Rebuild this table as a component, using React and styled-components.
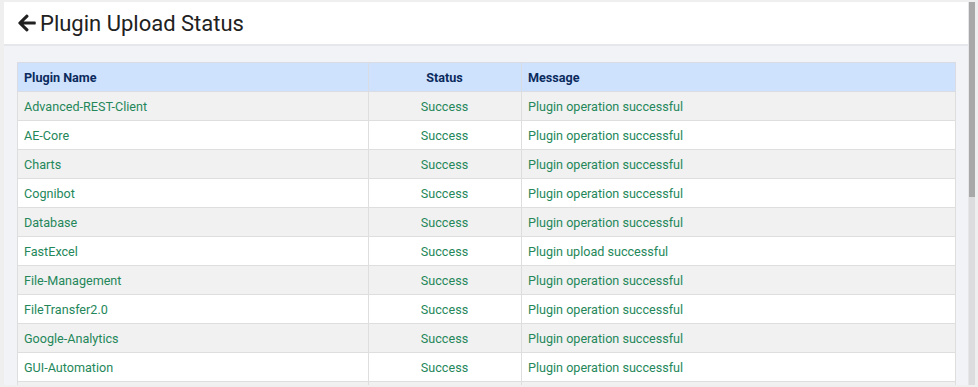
import React from "react";
import styled, { createGlobalStyle } from "styled-components";
import { FaArrowLeft } from "react-icons/fa";

const Global = createGlobalStyle`
  html, body { margin: 0; padding: 0; background: #efefef; overflow: hidden; }
  body { font-family: Roboto, "Noto Sans", Arial, sans-serif; }
`;

const Frame = styled.div`
  display: flex;
  padding: 2px 3px 2px 4px;
  height: 387px;
  box-sizing: border-box;
`;

const Content = styled.div`
  flex: 1;
  min-width: 0;
  overflow: hidden;
  background: #f2f3f7;
`;

const ScrollTrack = styled.div`
  width: 6px;
  flex: none;
  display: flex;
  flex-direction: column;
  background: #dcdcde;
  border-left: 1px solid #e6e6e8;
`;

const ScrollThumb = styled.div`
  height: 195px;
  background: #a8a8a8;
`;

const Header = styled.header`
  display: flex;
  align-items: center;
  gap: 3px;
  height: 42px;
  padding: 0 13px;
  background: #ffffff;
  border-bottom: 2px solid #e6e7ea;
  color: #212121;
  font-size: 22px;
  font-weight: 400;
`;

const Back = styled.span`
  display: inline-flex;
  font-size: 20px;
  margin-top: -1px;
`;

const Body = styled.div`
  padding: 16px 12px 16px 13px;
`;

const Table = styled.table`
  width: 100%;
  border-collapse: collapse;
  table-layout: fixed;
  font-size: 12.6px;
  border: 1px solid #dcdcdc;
`;

const Th = styled.th`
  height: 28px;
  padding: 0 7px 0 6px;
  background: #cfe2fd;
  color: #0b2b5e;
  font-weight: 700;
  text-align: ${(p) => p.$align || "left"};
  border: 1px solid #d9dde3;
`;

const Tr = styled.tr`
  background: ${(p) => (p.$odd ? "#f1f1f1" : "#ffffff")};
`;

const Td = styled.td`
  height: 28px;
  padding: 0 7px 0 6px;
  color: #24875a;
  text-align: ${(p) => p.$align || "left"};
  border: 1px solid #dedede;
`;

const rows = [
  ["Advanced-REST-Client", "Plugin operation successful"],
  ["AE-Core", "Plugin operation successful"],
  ["Charts", "Plugin operation successful"],
  ["Cognibot", "Plugin operation successful"],
  ["Database", "Plugin operation successful"],
  ["FastExcel", "Plugin upload successful"],
  ["File-Management", "Plugin operation successful"],
  ["FileTransfer2.0", "Plugin operation successful"],
  ["Google-Analytics", "Plugin operation successful"],
  ["GUI-Automation", "Plugin operation successful"],
  ["HTTP-Client", "Plugin operation successful"],
  ["Image-Recognition", "Plugin operation successful"],
  ["JSON-Parser", "Plugin operation successful"],
  ["Mail", "Plugin operation successful"],
  ["Microsoft-Excel", "Plugin operation successful"],
  ["OCR", "Plugin operation successful"],
  ["PDF-Automation", "Plugin operation successful"],
  ["Python", "Plugin operation successful"],
  ["Salesforce", "Plugin operation successful"],
  ["SAP", "Plugin operation successful"],
  ["Terminal-Emulator", "Plugin operation successful"],
  ["Web-Automation", "Plugin operation successful"],
];

export default function App() {
  return (
    <>
      <Global />
      <Frame>
        <Content>
          <Header>
            <Back>
              <FaArrowLeft />
            </Back>
            Plugin Upload Status
          </Header>
          <Body>
            <Table>
              <colgroup>
                <col style={{ width: "351px" }} />
                <col style={{ width: "153px" }} />
                <col />
              </colgroup>
              <thead>
                <tr>
                  <Th>Plugin Name</Th>
                  <Th $align="center">Status</Th>
                  <Th>Message</Th>
                </tr>
              </thead>
              <tbody>
                {rows.map(([name, msg], i) => (
                  <Tr key={name} $odd={i % 2 === 0}>
                    <Td>{name}</Td>
                    <Td $align="center">Success</Td>
                    <Td>{msg}</Td>
                  </Tr>
                ))}
              </tbody>
            </Table>
          </Body>
        </Content>
        <ScrollTrack>
          <ScrollThumb />
        </ScrollTrack>
      </Frame>
    </>
  );
}
